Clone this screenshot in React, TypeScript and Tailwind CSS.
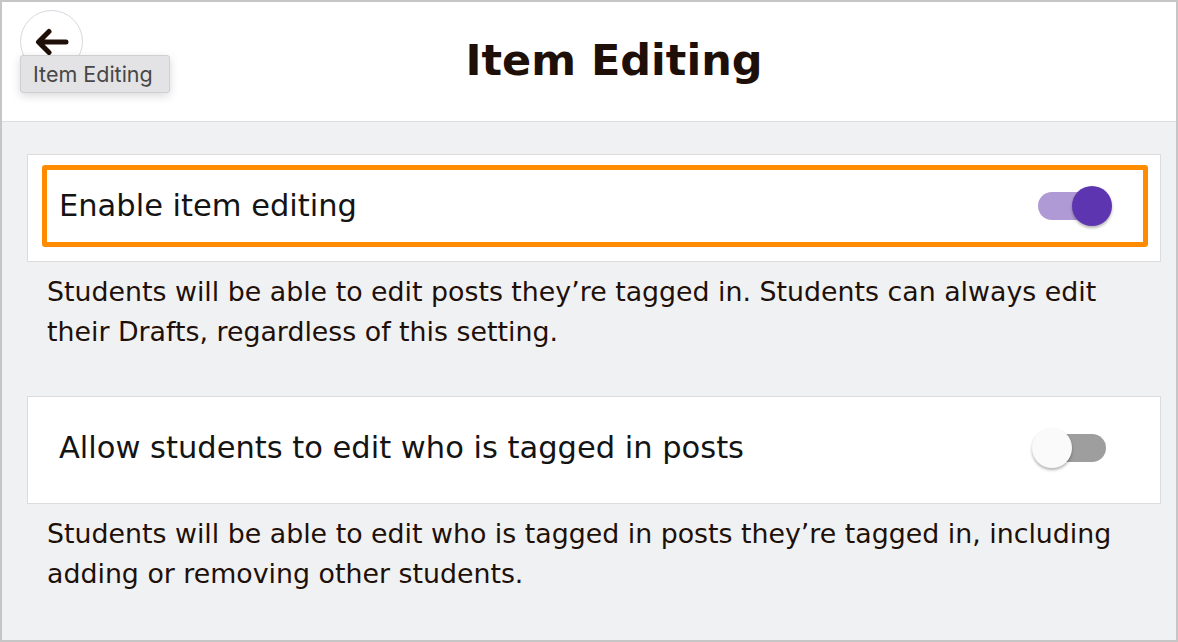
import React from "react";

function Toggle({ on }: { on: boolean }) {
  return (
    <div className="relative flex h-[40px] w-[80px] shrink-0 items-center">
      <div
        className={
          on
            ? "mx-[6px] h-[28px] w-[68px] rounded-full bg-[#b09ad6]"
            : "mx-[6px] h-[28px] w-[68px] rounded-full bg-[#9e9e9e]"
        }
      />
      <div
        className={
          on
            ? "absolute right-0 top-0 h-[40px] w-[40px] rounded-full bg-[#5e35b1] shadow-[0_2px_3px_rgba(0,0,0,0.3)]"
            : "absolute left-0 top-0 h-[40px] w-[40px] rounded-full bg-[#fafafa] shadow-[0_2px_3px_rgba(0,0,0,0.3)]"
        }
      />
    </div>
  );
}

function SettingCard({ label, on, focused }: { label: string; on: boolean; focused: boolean }) {
  return (
    <div className="border border-[#dcdcdc] bg-white pb-[14px] pl-[14px] pr-[12px] pt-[10px]">
      <div
        className={
          focused
            ? "flex h-[82px] items-center justify-between rounded-[3px] border-[5px] border-[#ff8c00] pl-[12px] pr-[31px]"
            : "flex h-[82px] items-center justify-between rounded-[3px] border-[5px] border-transparent pl-[12px] pr-[31px]"
        }
      >
        <span className="text-[30.5px] leading-none text-[#141414]">{label}</span>
        <Toggle on={on} />
      </div>
    </div>
  );
}

export default function App() {
  return (
    <div className="box-border flex h-[642px] w-[1178px] flex-col overflow-hidden border-2 border-[#c6c6c6] bg-[#f0f1f3] font-['DejaVu_Sans',sans-serif] text-[#1e1008]">
      <header className="relative flex h-[120px] shrink-0 items-center justify-center border-b border-[#dcdcdc] bg-white pl-[50px]">
        <div className="absolute left-[18px] top-[8px] flex h-[63px] w-[63px] items-center justify-center rounded-full border-[1.5px] border-[#d5d9de] bg-white">
          <svg width="34" height="28" viewBox="0 0 34 28" fill="none">
            <path
              d="M31 14H4M14 3.5L3.5 14L14 24.5"
              stroke="#1e1008"
              strokeWidth="5"
              strokeLinecap="round"
              strokeLinejoin="round"
            />
          </svg>
        </div>
        <div className="absolute left-[18px] top-[53px] flex h-[38px] w-[150px] items-center rounded-[3px] border border-[#cfcfd1] bg-[#e3e3e5] pl-[12px] font-['Inter',sans-serif] text-[21.5px] text-[#474747] shadow-[0_3px_10px_rgba(0,0,0,0.15)]">
          Item Editing
        </div>
        <h1 className="mt-[-2px] text-[43px] font-bold leading-none">Item Editing</h1>
      </header>
      <main className="flex flex-col pl-[25px] pr-[15px] pt-[32px]">
        <SettingCard label="Enable item editing" on={true} focused={true} />
        <p className="mt-[10px] px-[20px] text-[26.8px] leading-[39.5px]">
          Students will be able to edit posts they’re tagged in. Students can always edit their Drafts, regardless of this setting.
        </p>
        <div className="mt-[45px]">
          <SettingCard label="Allow students to edit who is tagged in posts" on={false} focused={false} />
        </div>
        <p className="mt-[10px] px-[20px] text-[26.8px] leading-[39.5px]">
          Students will be able to edit who is tagged in posts they’re tagged in, including adding or removing other students.
        </p>
      </main>
    </div>
  );
}
